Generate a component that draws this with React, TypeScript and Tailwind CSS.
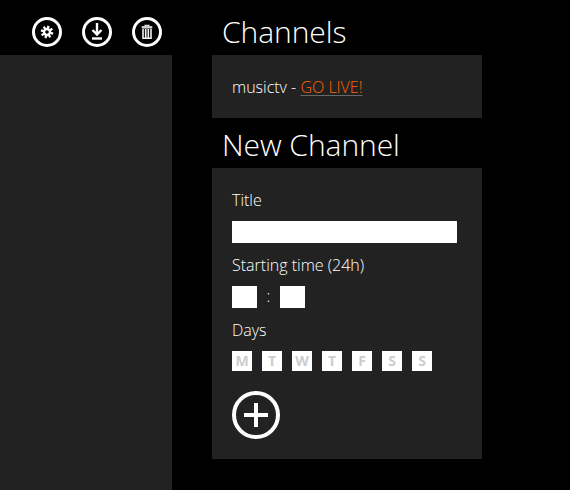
import type { ReactNode } from "react";

const days = ["M", "T", "W", "T", "F", "S", "S"];
const teeth = [0, 45, 90, 135, 180, 225, 270, 315];

function RoundIcon({ label, children }: { label: string; children: ReactNode }) {
  return (
    <button aria-label={label} className="size-[30px]">
      <svg viewBox="0 0 30 30" className="size-[30px]" fill="none" stroke="white">
        <circle cx="15" cy="15" r="13.5" strokeWidth="3" />
        {children}
      </svg>
    </button>
  );
}

function Heading({ children }: { children: ReactNode }) {
  return <h2 className="h-[50px] pl-2.5 text-[30px] leading-[54px] tracking-[-0.06px]">{children}</h2>;
}

function Label({ children }: { children: ReactNode }) {
  return <label className="block h-[23px] leading-[25px]">{children}</label>;
}

export default function App() {
  return (
    <div className="flex h-[490px] w-[570px] gap-10 overflow-hidden bg-black font-['Open_Sans',sans-serif] text-[16px] font-light text-white">
      <aside className="flex w-[172px] flex-col">
        <div className="flex h-[55px] gap-5 pt-[17px] pl-8">
          <RoundIcon label="Settings">
            <circle cx="15" cy="15" r="3" strokeWidth="2.4" />
            {teeth.map((a) => (
              <path key={a} d="M15 11.5V8.7" strokeWidth="2.3" transform={`rotate(${a + 14} 15 15)`} />
            ))}
          </RoundIcon>
          <RoundIcon label="Download">
            <path d="M15 6V17.5M10.5 13L15 17.5L19.5 13" strokeWidth="2.4" />
            <path d="M10 21.5H20" strokeWidth="2.4" />
          </RoundIcon>
          <RoundIcon label="Delete">
            <path d="M13 9V8.3H17V9" strokeWidth="1.2" opacity=".85" />
            <path d="M9.7 10.3H20.3" strokeWidth="2.4" opacity=".85" />
            <path d="M11 12V21.2H19V12M13.7 12V21M16.3 12V21" strokeWidth="1.6" opacity=".95" />
          </RoundIcon>
        </div>
        <div className="flex-1 bg-[#222]" />
      </aside>
      <main className="w-[270px] pt-[5px]">
        <Heading>Channels</Heading>
        <section className="h-[63px] bg-[#222] p-5 leading-[25px]">
          musictv -{" "}
          <a href="#" className="text-[#ff6600] underline decoration-[#666] decoration-1 underline-offset-2 [text-decoration-skip-ink:none]">GO LIVE!</a>
        </section>
        <Heading>New Channel</Heading>
        <form className="flex h-[291px] flex-col gap-2.5 bg-[#222] p-5">
          <Label>Title</Label>
          <input aria-label="Title" className="h-[22px] w-[225px] shrink-0 bg-white text-black" />
          <Label>Starting time (24h)</Label>
          <div className="flex h-[22px] items-center">
            <input aria-label="Hour" className="h-[22px] w-[25px] bg-white text-black" />
            <span className="h-[22px] w-[23px] text-center leading-5">:</span>
            <input aria-label="Minute" className="h-[22px] w-[25px] bg-white text-black" />
          </div>
          <Label>Days</Label>
          <div className="flex gap-2.5">
            {days.map((d, i) => (
              <button type="button" key={i} className="size-5 bg-white text-center text-[14px] leading-5 font-bold text-[#ccc]">
                {d}
              </button>
            ))}
          </div>
          <button type="button" aria-label="Add channel" className="mt-2.5 size-12">
            <svg viewBox="0 0 48 48" className="size-12" fill="none" stroke="white" strokeWidth="4">
              <circle cx="24" cy="24" r="22" />
              <path d="M24 12V36M12 24H36" />
            </svg>
          </button>
        </form>
      </main>
    </div>
  );
}
